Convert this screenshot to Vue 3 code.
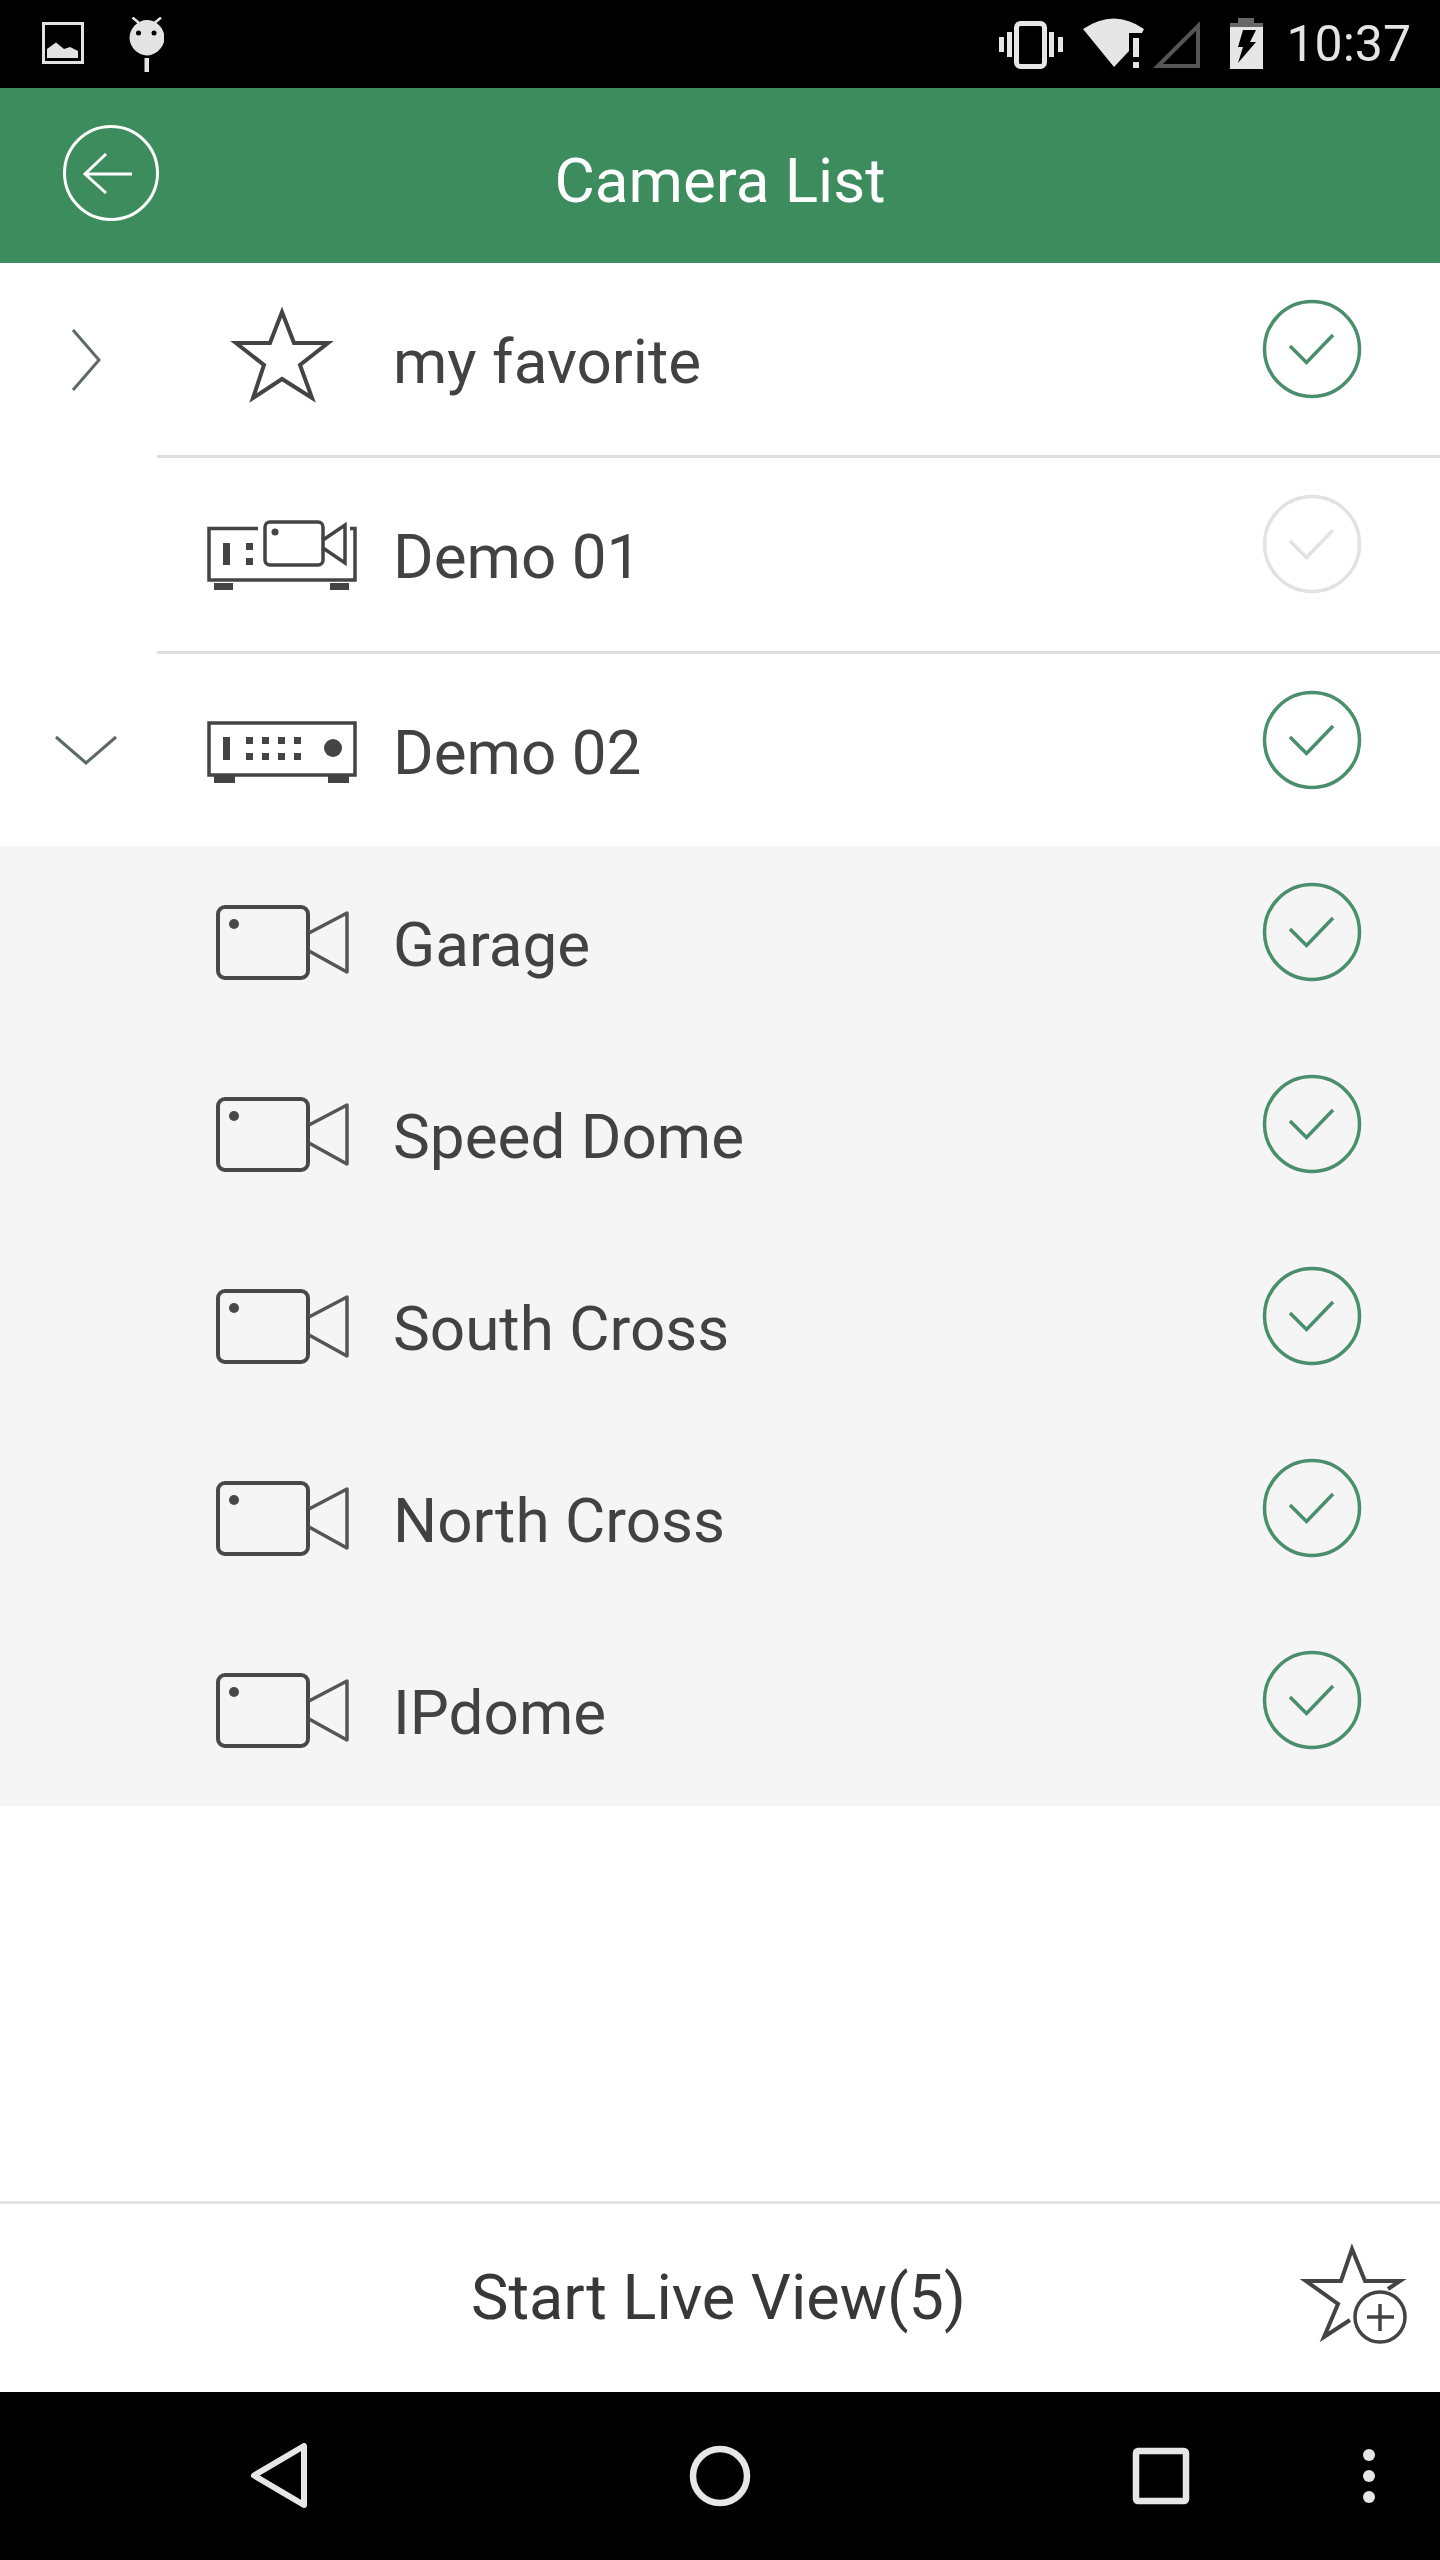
<script setup>
const subCameras = ['Garage', 'Speed Dome', 'South Cross', 'North Cross', 'IPdome']
</script>

<template>
  <div class="screen">
    <div class="status">
      <svg class="status-left" width="122" height="55" viewBox="42 19 122 55">
        <rect x="43.500" y="25.500" width="39" height="39" fill="none" stroke="#e2e2e2" stroke-width="3" />
        <path d="M47 60V51L56 44.500L64 51L70 49L78 53V60Z" fill="#e2e2e2" />
        <path d="M147 22C156 22 164.500 30 164.500 40C164.500 49 156 57.500 147 57.500C138 57.500 129.500 49 129.500 40C129.500 30 138 22 147 22Z" fill="#e4e4e4" />
        <path d="M132.500 19.500L139 25M161 19.500L154.500 25" stroke="#e4e4e4" stroke-width="2.500" fill="none" />
        <rect x="144.500" y="60" width="4.500" height="14" fill="#e4e4e4" />
        <circle cx="138.500" cy="35" r="2.500" fill="#000" />
        <circle cx="154" cy="35" r="2.500" fill="#000" />
      </svg>
      <div class="status-right">
        <svg width="264" height="52" viewBox="998 18 264 52">
          <rect x="1015.500" y="23.500" width="28" height="43" rx="4" fill="none" stroke="#e6e6e6" stroke-width="5" />
          <path d="M998 37h5v15h-5zM1006 32h5v25h-5zM1048 32h5v25h-5zM1057 37h5v15h-5z" fill="#e6e6e6" />
          <path d="M1082 29Q1113 8 1143 29L1141 33H1128V51L1113 67Z" fill="#e6e6e6" />
          <path d="M1132 38h6v19h-6zM1132 62h6v6h-6z" fill="#e6e6e6" />
          <path d="M1157 66L1197 26V66Z" fill="none" stroke="#555" stroke-width="4" />
          <path d="M1237 18h16v5h9v4h-33v-4h8z" fill="#666" />
          <path d="M1229 27h33v42h-33z" fill="#e6e6e6" />
          <path d="M1242 30H1255L1249 42H1255L1237 63L1242 47H1237Z" fill="#000" />
        </svg>
        <span class="clock">10:37</span>
      </div>
    </div>

    <header class="topbar">
      <svg class="back" width="98" height="98" viewBox="0 0 98 98">
        <circle cx="49" cy="49" r="46.500" fill="none" stroke="#fff" stroke-width="3" />
        <path d="M70 50H24M44 30L23 50L44 69" fill="none" stroke="#fff" stroke-width="3" />
      </svg>
      <h1 class="title">Camera List</h1>
    </header>

    <main class="list">
      <div class="row row-a">
        <div class="expander">
          <svg width="30" height="64" viewBox="0 0 30 64"><path d="M2 2L28 32L2 62" fill="none" stroke="#5c6a60" stroke-width="3" /></svg>
        </div>
        <div class="row-body ruled">
          <div class="icon-cell">
            <svg class="star" width="106" height="100" viewBox="0 0 106 100">
              <path d="M53 7L65 38H99L71 60L83 93L53 74L24 93L35 60L7 38H41Z" fill="none" stroke="#444" stroke-width="4" />
            </svg>
          </div>
          <span class="label">my favorite</span>
          <svg class="check" width="100" height="100" viewBox="0 0 100 100">
            <circle cx="50" cy="50" r="47.500" fill="none" stroke="#4a8f6c" stroke-width="3.500" />
            <path d="M28 47L44.500 63.500L71 36" fill="none" stroke="#4a8f6c" stroke-width="3.500" />
          </svg>
        </div>
      </div>

      <div class="row row-b">
        <div class="expander"></div>
        <div class="row-body ruled">
          <div class="icon-cell">
            <svg width="150" height="70" viewBox="0 0 150 70">
              <path d="M51 8.500H2V60H148V8.500H143" fill="none" stroke="#444" stroke-width="3.500" />
              <path d="M7 63h19v7H7zM123 63h19v7h-19zM16 23h7v22h-7zM39 23h7v7h-7zM39 38h7v7h-7z" fill="#444" />
              <rect x="58" y="2" width="58" height="43" rx="5" fill="none" stroke="#444" stroke-width="3.500" />
              <circle cx="68" cy="12" r="3.500" fill="#444" />
              <path d="M116 20L138 5V43L116 28" fill="none" stroke="#444" stroke-width="3.500" />
            </svg>
          </div>
          <span class="label">Demo 01</span>
          <svg class="check" width="100" height="100" viewBox="0 0 100 100">
            <circle cx="50" cy="50" r="47.500" fill="none" stroke="#e2e2e2" stroke-width="3.500" />
            <path d="M28 47L44.500 63.500L71 36" fill="none" stroke="#e2e2e2" stroke-width="3.500" />
          </svg>
        </div>
      </div>

      <div class="row row-c">
        <div class="expander">
          <svg class="down" width="64" height="30" viewBox="0 0 64 30"><path d="M2 2L32 28L62 2" fill="none" stroke="#5c6a60" stroke-width="3" /></svg>
        </div>
        <div class="row-body">
          <div class="icon-cell">
            <svg class="nvr" width="150" height="62" viewBox="0 0 150 62">
              <rect x="2" y="2" width="146" height="52" fill="none" stroke="#444" stroke-width="3.500" />
              <path d="M7 55h21v7H7zM121 55h21v7h-21zM16 16h7v23h-7z" fill="#444" />
              <path d="M39 16h7v7h-7zM55 16h7v7h-7zM71 16h7v7h-7zM87 16h7v7h-7zM39 32h7v7h-7zM55 32h7v7h-7zM71 32h7v7h-7zM87 32h7v7h-7z" fill="#444" />
              <circle cx="126" cy="27" r="9" fill="#444" />
            </svg>
          </div>
          <span class="label">Demo 02</span>
          <svg class="check" width="100" height="100" viewBox="0 0 100 100">
            <circle cx="50" cy="50" r="47.500" fill="none" stroke="#4a8f6c" stroke-width="3.500" />
            <path d="M28 47L44.500 63.500L71 36" fill="none" stroke="#4a8f6c" stroke-width="3.500" />
          </svg>
        </div>
      </div>

      <div class="children">
        <div v-for="name in subCameras" :key="name" class="row row-child">
          <div class="expander"></div>
          <div class="row-body">
            <div class="icon-cell">
              <svg width="133" height="75" viewBox="0 0 133 75">
                <rect x="2" y="2" width="90" height="71" rx="7" fill="none" stroke="#484848" stroke-width="4" />
                <circle cx="18" cy="19" r="5" fill="#484848" />
                <path d="M93 28L131 8V67L93 46" fill="none" stroke="#555" stroke-width="3.500" stroke-linejoin="round" />
              </svg>
            </div>
            <span class="label">{{ name }}</span>
            <svg class="check" width="100" height="100" viewBox="0 0 100 100">
              <circle cx="50" cy="50" r="47.500" fill="none" stroke="#4a8f6c" stroke-width="3.500" />
              <path d="M28 47L44.500 63.500L71 36" fill="none" stroke="#4a8f6c" stroke-width="3.500" />
            </svg>
          </div>
        </div>
      </div>
    </main>

    <footer class="footer">
      <span></span>
      <span class="start">Start Live View(5)</span>
      <svg class="fav-add" width="108" height="102" viewBox="0 0 108 102">
        <path d="M88 46L100 38H65L52 6L41 38H6L38 61L24 94L50 77" fill="none" stroke="#444" stroke-width="4" />
        <circle cx="80" cy="74" r="25" fill="none" stroke="#444" stroke-width="3.500" />
        <path d="M67 74H94M80 61V88" fill="none" stroke="#444" stroke-width="3.500" />
      </svg>
    </footer>

    <nav class="navbar">
      <svg width="1136" height="66" viewBox="250 2443 1136 66">
        <path d="M304 2446V2505L254 2475.500Z" fill="none" stroke="#e6e6e6" stroke-width="6" stroke-linejoin="round" />
        <circle cx="720" cy="2476" r="27" fill="none" stroke="#e6e6e6" stroke-width="6.500" />
        <rect x="1136" y="2451" width="50" height="50" rx="2" fill="none" stroke="#e6e6e6" stroke-width="6.500" />
        <circle cx="1369" cy="2455" r="6" fill="#e6e6e6" />
        <circle cx="1369" cy="2476" r="6" fill="#e6e6e6" />
        <circle cx="1369" cy="2497" r="6" fill="#e6e6e6" />
      </svg>
    </nav>
  </div>
</template>

<style>
html, body { margin: 0; background: #fff; }
</style>

<style scoped>
.screen {
  width: 1440px;
  height: 2560px;
  display: flex;
  flex-direction: column;
  background: #fff;
  overflow: hidden;
  font-family: Roboto, sans-serif;
  color: #424242;
}
.status {
  height: 88px;
  flex: none;
  background: #000;
  display: flex;
  align-items: center;
  justify-content: space-between;
  padding: 0 29px 0 42px;
}
.status-left { display: block; }
.status-right { display: flex; align-items: center; gap: 23px; }
.clock {
  font-size: 50px;
  line-height: 88px;
  color: #e4e4e4;
}
.topbar {
  height: 175px;
  flex: none;
  background: #3d8c5d;
  display: grid;
  grid-template-columns: 1fr auto 1fr;
  align-items: center;
  padding: 0 62px;
}
.back { display: block; margin-top: -5px; }
.title {
  margin: 0;
  font-weight: 400;
  font-size: 62px;
  color: #fff;
  padding-top: 9px;
}
.list { flex: 1; display: flex; flex-direction: column; }
.row { display: flex; align-items: stretch; }
.row-a { height: 195px; }
.row-b { height: 196px; }
.row-c { height: 192px; }
.row-child { height: 192px; }
.children { background: #f5f5f5; }
.expander {
  width: 157px;
  flex: none;
  display: flex;
  align-items: center;
  justify-content: center;
}
.expander svg { display: block; margin-left: 14px; margin-top: -2px; }
.expander .down { margin-top: 0; }
.row-body {
  flex: 1;
  display: flex;
  align-items: center;
  padding-right: 78px;
  min-width: 0;
}
.ruled { border-bottom: 3px solid #dfdfdf; }
.icon-cell {
  width: 236px;
  box-sizing: border-box;
  padding-left: 14px;
  flex: none;
  display: flex;
  align-items: center;
  justify-content: center;
}
.icon-cell svg { display: block; }
.star { margin-bottom: 9px; }
.nvr { margin-top: 4px; }
.label {
  flex: 1;
  font-size: 62px;
  line-height: 80px;
  margin-top: 5px;
}
.check { display: block; flex: none; margin-bottom: 21px; }
.footer {
  height: 191px;
  flex: none;
  box-sizing: border-box;
  border-top: 3px solid #e4e4e4;
  display: grid;
  grid-template-columns: 1fr auto 1fr;
  align-items: center;
}
.start {
  font-size: 63px;
  line-height: 80px;
  color: #383838;
  margin-right: 3px;
}
.fav-add { display: block; justify-self: end; margin: 0 32px 8px 0; }
.navbar {
  height: 168px;
  flex: none;
  background: #000;
  display: flex;
  align-items: center;
  justify-content: flex-end;
  padding-right: 54px;
}
.navbar svg { display: block; margin-bottom: 1px; }
</style>
